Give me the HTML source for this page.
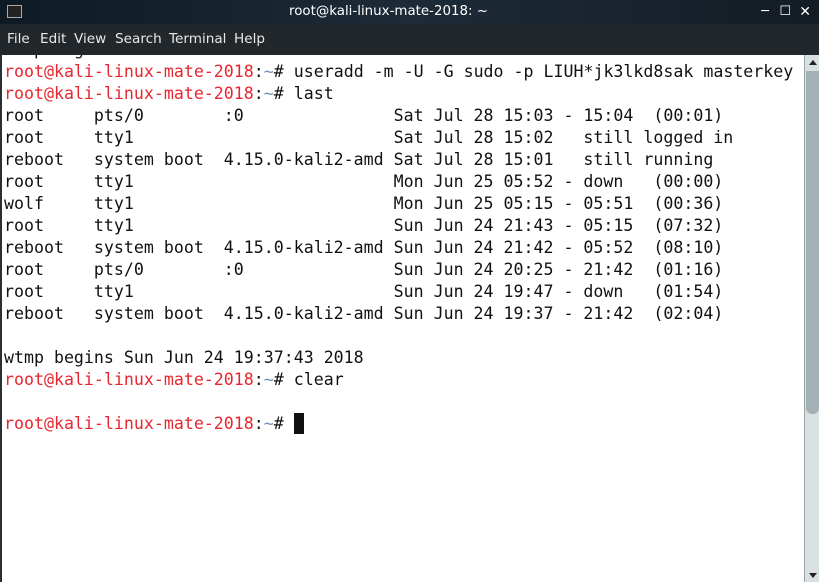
<!DOCTYPE html>
<html><head><meta charset="utf-8"><style>
html,body{margin:0;padding:0;width:819px;height:582px;overflow:hidden;background:#fff;font-family:"DejaVu Sans","Liberation Sans",sans-serif}
#title{position:absolute;left:0;top:0;width:819px;height:24px;background:linear-gradient(90deg,#0e1a24,#1d2b38 50%,#141c24);color:#fff;font-size:13.4px;line-height:24px}
#ttext{position:absolute;left:289px;top:0}
#icon{position:absolute;left:7px;top:5px;width:13px;height:11px;border:1px solid #aaa;background:#222}
#menu{position:absolute;left:0;top:24px;width:819px;height:31px;background:#22272b;color:#e8e8e8;font-size:13.6px;line-height:30px}
#menu span{position:absolute;top:0}
#term{position:absolute;left:2px;top:55px;width:802px;height:527px;overflow:hidden;background:#fff}
pre{margin:0;position:absolute;left:2px;top:-16px;font-family:"DejaVu Sans Mono","Liberation Mono",monospace;font-size:16.6px;line-height:22px;color:#111}
.r{color:#e8262f}.b{color:#7091b8}
#cur{display:inline-block;width:10px;height:21px;background:#111;vertical-align:-5px}
#sb{position:absolute;left:804px;top:55px;width:15px;height:527px;background:#d9e0e2;border-left:1px solid #9aa5a8}
#thumb{position:absolute;left:1px;top:16px;width:13px;height:343px;background:#a4b1b6;border-radius:0 0 6px 6px}
#left{position:absolute;left:0;top:55px;width:2px;height:527px;background:#2a2f33}
</style></head><body>
<div id="title"><div id="icon"></div><span id="ttext">root@kali-linux-mate-2018: ~</span>
<span style="position:absolute;right:50px;top:0;font-size:13px">&#9472;</span>
<span style="position:absolute;right:28px;top:0;font-size:13px">&#9744;</span>
<span style="position:absolute;right:8px;top:0;font-size:14px;font-weight:bold">&#10005;</span></div>
<div id="menu"><span style="left:7px">File</span><span style="left:40px">Edit</span><span style="left:74px">View</span><span style="left:115px">Search</span><span style="left:169px">Terminal</span><span style="left:234px">Help</span></div>
<div id="left"></div>
<div id="term"><pre>   p   g
<span class="r">root@kali-linux-mate-2018</span>:<span class="b">~</span># useradd -m -U -G sudo -p LIUH*jk3lkd8sak masterkey
<span class="r">root@kali-linux-mate-2018</span>:<span class="b">~</span># last
root     pts/0        :0               Sat Jul 28 15:03 - 15:04  (00:01)
root     tty1                          Sat Jul 28 15:02   still logged in
reboot   system boot  4.15.0-kali2-amd Sat Jul 28 15:01   still running
root     tty1                          Mon Jun 25 05:52 - down   (00:00)
wolf     tty1                          Mon Jun 25 05:15 - 05:51  (00:36)
root     tty1                          Sun Jun 24 21:43 - 05:15  (07:32)
reboot   system boot  4.15.0-kali2-amd Sun Jun 24 21:42 - 05:52  (08:10)
root     pts/0        :0               Sun Jun 24 20:25 - 21:42  (01:16)
root     tty1                          Sun Jun 24 19:47 - down   (01:54)
reboot   system boot  4.15.0-kali2-amd Sun Jun 24 19:37 - 21:42  (02:04)

wtmp begins Sun Jun 24 19:37:43 2018
<span class="r">root@kali-linux-mate-2018</span>:<span class="b">~</span># clear

<span class="r">root@kali-linux-mate-2018</span>:<span class="b">~</span># <span id="cur"></span></pre></div>
<div id="sb"><div style="position:absolute;left:4px;top:5px;width:0;height:0;border-left:4px solid transparent;border-right:4px solid transparent;border-bottom:5px solid #222"></div><div id="thumb"></div><div style="position:absolute;left:4px;bottom:4px;width:0;height:0;border-left:4px solid transparent;border-right:4px solid transparent;border-top:5px solid #222"></div></div>
</body></html>
